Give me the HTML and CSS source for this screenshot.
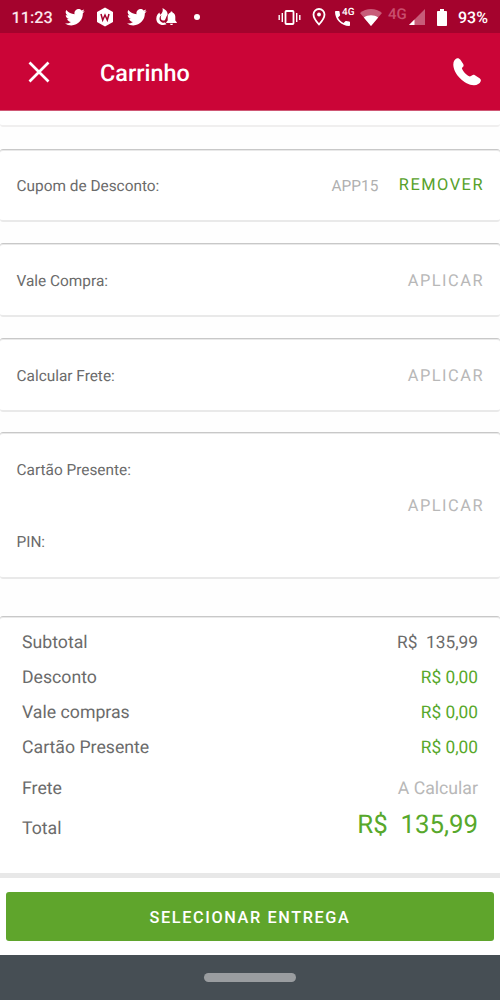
FILE: index.html
```
<!DOCTYPE html>
<html lang="pt-BR">
<head>
<meta charset="utf-8">
<title>Carrinho</title>
<link rel="stylesheet" href="styles.css">
</head>
<body>
<div class="screen">
  <div class="status">
    <span class="time">11:23</span>
    <svg class="bird" viewBox="0 3 24 19.5"><path d="M23.6 5a10 10 0 0 1-2.8.8A4.8 4.8 0 0 0 23 3a9.800 9.800 0 0 1-3.100 1.200A4.900 4.900 0 0 0 11.500 8.700 14 14 0 0 1 1.600 3.700a4.900 4.900 0 0 0 1.500 6.500 4.800 4.800 0 0 1-2.200-.6 4.900 4.900 0 0 0 3.900 4.900 5 5 0 0 1-2.200.1 4.900 4.900 0 0 0 4.600 3.400A9.900 9.900 0 0 1 0 20a13.900 13.900 0 0 0 7.500 2.200c9.100 0 14.300-7.700 13.900-14.600A10 10 0 0 0 23.600 5z"/></svg>
    <svg class="hex" viewBox="0 0 18 20"><path d="M9 .5 17 5v10l-8 4.500L1 15V5z"/><path class="mark" d="M5 7l1.700 6L9 8l2.300 5L13 7"/></svg>
    <svg class="bird second" viewBox="0 3 24 19.5"><path d="M23.6 5a10 10 0 0 1-2.800.8A4.800 4.800 0 0 0 23 3a9.800 9.800 0 0 1-3.100 1.200A4.900 4.900 0 0 0 11.500 8.700 14 14 0 0 1 1.600 3.700a4.900 4.900 0 0 0 1.500 6.500 4.800 4.800 0 0 1-2.200-.6 4.900 4.900 0 0 0 3.900 4.900 5 5 0 0 1-2.200.1 4.900 4.900 0 0 0 4.600 3.400A9.900 9.900 0 0 1 0 20a13.900 13.900 0 0 0 7.500 2.200c9.100 0 14.300-7.700 13.900-14.600A10 10 0 0 0 23.600 5z"/></svg>
    <svg class="alert" viewBox="0 0 21 18"><path d="M6.500 0c4 2 5.500 4.500 5 7-1.500 1.500-1.500 4-3 5.500H7c-2.300-.3-2.800-3-1.500-5.500C3.500 8.500 3 11 4 12.700c1 1.600 3 2.300 5 1.900l1.500 1.700C5.500 18.500.3 15.500.3 10.700.3 7.500 2 5.500 3.500 4.500c0 1 .3 1.700 1 2.200C6.800 4.500 7 2.500 6.500 0z"/><path d="M15.500 3.500c.7 0 1 .4 1 1 2 .7 2.800 2.300 2.800 4.300v3.700l1.500 1.700v.8H10.200v-.8l1.500-1.700V8.800c0-2 .8-3.600 2.800-4.300 0-.6.300-1 1-1zM14 15.700h3c0 1.800-3 1.800-3 0z"/></svg>
    <span class="dot"></span>
    <svg class="vibrate" viewBox="0 0 23 17"><rect class="line" x="7.500" y="2" width="8" height="13" rx=".8"/><path class="line thin" d="M4.300 4v9M1.200 6v5M18.700 4v9M21.800 6v5"/></svg>
    <svg class="pin" viewBox="0 0 14 18"><path class="line" d="M7 1a5.500 5.500 0 0 0-5.500 5.500C1.500 10.500 7 16.500 7 16.500s5.500-6 5.500-10A5.500 5.500 0 0 0 7 1z"/><circle cx="7" cy="6.500" r="1.900"/></svg>
    <span class="call"><svg class="call-icon" viewBox="3 3 18 18"><path d="M6.620 10.790c1.440 2.830 3.760 5.140 6.590 6.590l2.200-2.200c.27-.27.67-.36 1.020-.24 1.120.37 2.330.57 3.570.57.550 0 1 .45 1 1V20c0 .55-.45 1-1 1-9.390 0-17-7.610-17-17 0-.55.450-1 1-1h3.500c.55 0 1 .45 1 1 0 1.250.2 2.450.57 3.570.11.35.03.74-.25 1.020z"/></svg><span class="call-net">4G</span></span>
    <svg class="wifi" viewBox="0 0 22 17"><path class="faint" d="M0 4a17.500 17.500 0 0 1 22 0L11 17z"/><path d="M3.800 8.500c4-3 10.400-3 14.400 0L11 17z"/></svg>
    <span class="net">4G</span>
    <svg class="signal" viewBox="0 0 16 16"><path class="faint" d="M16 0v16H0z"/><path d="M5.500 10.500V16H0z"/></svg>
    <svg class="battery" viewBox="0 0 10 17"><path d="M3 0h4v2h2.200c.5 0 .8.300.8.800v13.400c0 .5-.3.800-.8.800H.8c-.5 0-.8-.3-.8-.8V2.800c0-.5.3-.8.800-.8H3z"/></svg>
    <span class="percent">93%</span>
  </div>
  <header class="appbar">
    <svg class="close" viewBox="0 0 22 22"><path d="M1.500 1.500l19 19M20.500 1.500l-19 19"/></svg>
    <h1 class="title">Carrinho</h1>
    <svg class="phone" viewBox="0 0 28 28"><path d="M.3 6.500C.3 3 2.300.7 4 .3c1.300-.3 2.500.3 3.400 1.500l2.800 4.300c.7 1.100.5 2.200-.5 3L8.900 10.300c1 3.300 4.800 7.200 8 8.300l2-1.200c1-.8 1.900-.9 3-.2l4.700 3c1.200.8 1.600 2 1 3.300-.8 2-3.400 3.800-6.800 3.700C11.500 27 .3 16 .3 6.500z"/></svg>
  </header>
  <main class="content">
    <div class="card tail"></div>
    <section class="card coupon"><span class="label">Cupom de Desconto:</span><span class="code">APP15</span><span class="action active">REMOVER</span></section>
    <section class="card voucher"><span class="label">Vale Compra:</span><span class="action">APLICAR</span></section>
    <section class="card shipping"><span class="label">Calcular Frete:</span><span class="action">APLICAR</span></section>
    <section class="card gift">
      <div class="fields"><span class="label">Cartão Presente:</span><span class="label">PIN:</span></div>
      <span class="action">APLICAR</span>
    </section>
    <section class="card summary">
      <div class="row"><span>Subtotal</span><span class="value">R$&nbsp; 135,99</span></div>
      <div class="row"><span>Desconto</span><span class="value green">R$ 0,00</span></div>
      <div class="row"><span>Vale compras</span><span class="value green">R$ 0,00</span></div>
      <div class="row"><span>Cartão Presente</span><span class="value green">R$ 0,00</span></div>
      <div class="row freight"><span>Frete</span><span class="value muted">A Calcular</span></div>
      <div class="row total"><span class="total-label">Total</span><span class="sum">R$&nbsp; 135,99</span></div>
    </section>
  </main>
  <footer class="footer"><button class="submit">SELECIONAR ENTREGA</button></footer>
  <div class="nav"><span class="handle"></span></div>
</div>
</body>
</html>
```
FILE: styles.css
```
* { box-sizing: border-box; }
body { margin: 0; font-family: Roboto, sans-serif; background: #fefefe; color: #6b6b6b; text-rendering: geometricPrecision; }
.screen { width: 500px; height: 1000px; display: flex; flex-direction: column; overflow: hidden; }
svg { fill: #fff; flex: none; display: block; }

.status { height: 33px; flex: none; background: #a4032d; color: #fff; display: flex; align-items: center; padding: 1px 0 0 11.500px; white-space: nowrap; }
.time { width: 53.500px; font-size: 16.300px; font-weight: 500; color: #fbe6eb; }
.bird { width: 20px; height: 17px; }
.hex { width: 18px; height: 20px; margin-left: 11px; }
.mark { fill: none; stroke: #a4032d; stroke-width: 1.5; }
.second { margin-left: 13px; }
.alert { width: 21px; height: 18px; margin-left: 9px; }
.dot { width: 6px; height: 6px; border-radius: 50%; background: #fff; margin-left: 17px; }
.vibrate { width: 23px; height: 17px; margin-left: 78px; }
.line { fill: none; stroke: #fff; stroke-width: 1.8; }
.thin { stroke-width: 1.4; }
.pin { width: 14px; height: 18px; margin-left: 11px; }
.call { display: flex; width: 20px; height: 18px; margin-left: 9px; position: relative; align-items: flex-end; }
.call-icon { width: 15px; height: 15px; }
.call-net { position: absolute; left: 7px; top: 0; font-size: 10px; line-height: 10px; font-weight: 500; }
.wifi { width: 22px; height: 17px; margin-left: 5px; }
.faint { fill: #c85c79; }
.net { font-size: 15px; line-height: 16px; font-weight: 500; color: #c94e6e; width: 21px; margin: -6px 0 0 6px; }
.signal { width: 16px; height: 16px; }
.battery { width: 10px; height: 17px; margin-left: 12px; }
.percent { font-size: 16px; font-weight: 500; margin-left: 11px; }

.appbar { height: 78px; flex: none; background: #cb0537; display: flex; align-items: center; padding: 1px 19px 0 28px; border-bottom: 1px solid #cf5875; }
.close { width: 22px; height: 22px; }
.close path { stroke: #fff; stroke-width: 2.7; }
.title { color: #fff; font-size: 23.400px; font-weight: 500; margin: 2px auto 0 50px; }
.phone { width: 28px; height: 28px; }

.content { flex: 1; min-height: 0; }
.card { border-top: 1px solid #c8c8c8; border-bottom: 2px solid #e9e9e9; border-radius: 3px; box-shadow: inset 0 1px #e9e9e9; background: #fff; display: flex; align-items: center; padding: 0 17px 0 16.500px; }
.tail { height: 16px; border-top: 0; border-bottom-color: #f0efef; box-shadow: none; margin-bottom: 22px; }
.coupon { height: 73px; margin-bottom: 21px; padding-top: 1px; }
.voucher { height: 74px; margin-bottom: 21px; padding-top: 3px; }
.shipping { height: 74px; margin-bottom: 20px; padding-top: 3px; }
.gift { height: 147px; margin-bottom: 37px; padding-top: 2px; }
.fields { margin-right: auto; display: grid; gap: 52px; }
.label { font-size: 15.400px; line-height: 20px; margin-right: auto; }
.code { font-size: 15.400px; color: #b0b0b0; margin-right: 20.500px; }
.action { font-size: 16.400px; line-height: 20px; letter-spacing: 1.5px; margin-right: -1px; padding-top: 1px; color: #b8b8b8; }
.active { color: #57a12b; }

.summary { display: block; height: 262px; padding: 8px 22px 0; border-bottom: 5px solid #e8e8e8; border-radius: 3px 3px 0 0; font-size: 17.700px; }
.row { height: 35.200px; display: flex; align-items: center; justify-content: space-between; white-space: nowrap; }
.value { font-size: 17.300px; }
.green { color: #57a82b; }
.muted { color: #b8b8b8; font-size: 17.700px; }
.freight { height: 46px; }
.total { height: 29px; }
.total-label { padding-top: 5px; }
.sum { color: #57a82b; font-size: 25.800px; padding-bottom: 3px; }

.footer { height: 77px; flex: none; padding: 14px 6px 0; background: #fff; }
.submit { display: block; width: 488px; height: 49px; border: 0; border-radius: 3px; background: #5fa52c; color: #fff; font: 500 16.300px Roboto, sans-serif; letter-spacing: 1.6px; padding: 2px 0 0; }
.nav { height: 45px; flex: none; background: #464e54; display: flex; justify-content: center; align-items: center; }
.handle { width: 92px; height: 9px; border-radius: 5px; background: #9a9da0; }
```
